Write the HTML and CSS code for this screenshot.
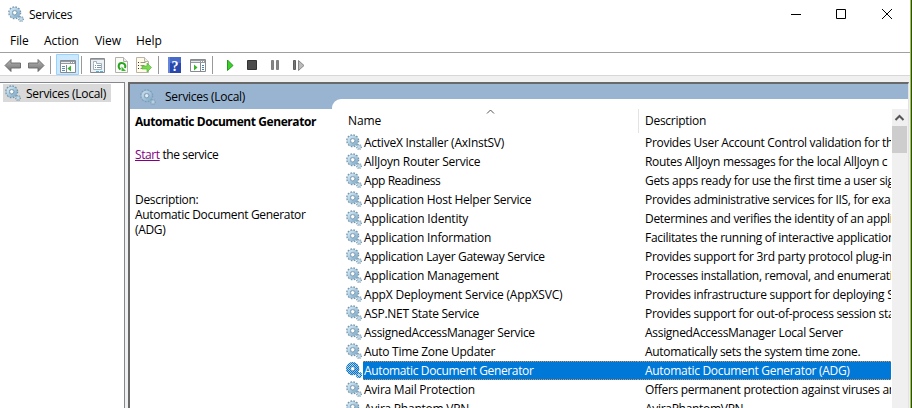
FILE: index.html
```html
<!DOCTYPE html>
<html lang="en">
<head>
<meta charset="utf-8">
<title>Services</title>
<link rel="stylesheet" href="styles.css">
</head>
<body>
<svg class="defs" aria-hidden="true">
  <defs>
    <linearGradient id="steel" x2="1" y2="1"><stop stop-color="#d4e9f5"/><stop offset="1" stop-color="#84aeca"/></linearGradient>
    <linearGradient id="arrow" x2="0" y2="1"><stop stop-color="#b8b8b8"/><stop offset="1" stop-color="#707070"/></linearGradient>
    <pattern id="dither" width="2" height="2" patternUnits="userSpaceOnUse"><path d="M0 0h1v1H0zM1 1h1v1H1z" fill="#0078d7"/></pattern>
    <symbol id="gear" viewBox="0 0 16 16">
      <circle cx="6.7" cy="6.7" r="5.7" fill="none" stroke="#7296ae" stroke-width="1.7" stroke-dasharray="1.7 1.28"/>
      <circle cx="6.7" cy="6.7" r="3.8" fill="none" stroke="#7fa4bd" stroke-width="3.2"/>
      <circle cx="6.7" cy="6.7" r="4" fill="none" stroke="url(#steel)" stroke-width="2.5"/>
      <circle cx="6.7" cy="6.7" r="2.1" fill="#fff" stroke="#6589a4" stroke-width=".7"/>
      <circle cx="13" cy="13" r="2.4" fill="none" stroke="#809dae" stroke-width="1.3" stroke-dasharray="1 .88"/>
      <circle cx="13" cy="13" r="1.4" fill="#fff" stroke="#9bbfd5" stroke-width="1.2"/>
    </symbol>
    <symbol id="gear-selected" viewBox="0 0 16 16">
      <use href="#gear" width="16" height="16"/>
      <circle cx="6.700" cy="6.700" r="4.300" fill="none" stroke="url(#dither)" stroke-width="4.600"/>
      <circle cx="13" cy="13" r="2" fill="none" stroke="url(#dither)" stroke-width="2"/>
    </symbol>
  </defs>
</svg>
<div class="desktop">
  <div class="window">
    <header class="titlebar">
      <svg class="gear"><use href="#gear"/></svg>
      <span class="title">Services</span>
      <svg class="controls" viewBox="0 0 120 28" fill="none" stroke="#000">
        <path d="M11 14.500h10M56.500 9.500h9v9h-9zM102 9l10 10M112 9l-10 10"/>
      </svg>
    </header>
    <nav class="menu"><span class="m-file">File</span><span class="m-action">Action</span><span class="m-view">View</span><span class="m-help">Help</span></nav>
    <div class="toolbar">
      <svg viewBox="0 0 320 22" width="320" height="22">
        <g fill="url(#arrow)" stroke="#666" stroke-width=".9" stroke-linejoin="round">
          <path d="M5 12.500l6-6v3.500h9.500v5H11v3.500z"/><path d="M44 12.500l-6-6v3.500h-9.500v5H38v3.500z"/>
        </g>
        <path d="M50.500 3v18M81.500 3v18M158.500 3v18M212.500 3v18" stroke="#999"/>
        <path d="M56.500 1.500h22v20h-22z" fill="#cce8ff" stroke="#99d1ff"/>
        <g>
          <path d="M60.500 7.500h15v12h-15z" fill="#fff" stroke="#858b91"/>
          <path d="M61 8h14v3H61z" fill="#959ba1"/><path d="M61 9.500h9" stroke="#e8eaec"/><path d="M71 9.500h4" stroke="#fff" stroke-dasharray="1 1"/>
          <path d="M66.500 12v7" stroke="#858b91"/><path d="M62 13.500h3M62 15.500h3M62 17.500h3" stroke="#578fb9"/>
          <path d="M71 12.500v6l-3.500-3z" fill="#35b42c"/>
        </g>
        <g>
          <path d="M90.500 5.500h14v14h-14z" fill="#eef1f3" stroke="#858b91"/><path d="M91 6.500h13" stroke="#a6acb2"/>
          <path d="M93.500 10.500v-2h3v2h5v6h-8z" fill="#fff" stroke="#a5b1ba"/><path d="M95 12.500h1M97 12.500h4M95 14.500h1M97 14.500h4" stroke="#7897ab"/>
          <path d="M96 18.500h3M100 18.500h3" stroke="#4bb3e5"/>
        </g>
        <g>
          <path d="M115.500 4.500h8l4 4v11h-12z" fill="#fbfbf8" stroke="#b2b1aa"/><path d="M123.500 4.500v4h4" fill="#eee" stroke="#b2b1aa"/>
          <path d="M120.500 16.500c-3-2-2-6.500 1-6.500s4.500 2 3.500 5" fill="none" stroke="#2aa321" stroke-width="2"/><path d="M121.500 13.500v4.500h4.500z" fill="#39bd2d"/>
        </g>
        <g>
          <path d="M136.500 4.500h8l4 4v11h-12z" fill="#fffbe8" stroke="#b9b4a7"/><path d="M144.500 4.500v4h4" fill="#eee" stroke="#b9b4a7"/>
          <path d="M138 9.500h1M138 12.500h1M138 15.500h1" stroke="#333"/><path d="M140.500 9.500h5M140.500 12.500h4M140.500 15.500h4" stroke="#9a9485"/>
          <path d="M142 13h5v-3l4.500 4.500-4.500 4.500v-3h-5z" fill="#7bd94e" stroke="#45ae35" stroke-width=".6"/>
        </g>
        <path d="M168 4h13v16h-13z" fill="#2947ad"/><path d="M168 4h2v16h-2z" fill="#6684d8"/><path d="M170 4h11v6h-11z" fill="#4669ca"/>
        <text class="qmark" x="171.500" y="17.500">?</text>
        <g>
          <path d="M190.500 6.500h15v12h-15z" fill="#fff" stroke="#858b91"/><path d="M191 7h14v3h-14z" fill="#959ba1"/><path d="M191 8.500h9" stroke="#e5e7e9"/><path d="M201 8.500h4" stroke="#fff" stroke-dasharray="1 1"/>
          <path d="M200.500 10v8" stroke="#858b91"/><path d="M202 12.500h2M202 14.500h2M202 16.500h2" stroke="#4584b2"/><path d="M194 11.500v6l3.500-3z" fill="#35b42c"/>
        </g>
        <path d="M227.500 7v10.500l5.500-5z" fill="#3bd12b" stroke="#249a1c"/>
        <path d="M247.500 7.500h9v9h-9z" fill="#4b4b4b" stroke="#333"/>
        <path d="M271.500 7.500h2v9h-2zM276.500 7.500h2v9h-2z" fill="#858585" stroke="#777" stroke-width=".9"/>
        <path d="M293.500 7.500h2v9h-2z" fill="#777" stroke="#555" stroke-width=".9"/><path d="M298.500 7.500v10l5.500-5z" fill="#bbb" stroke="#888"/>
      </svg>
    </div>
    <main class="panes">
      <aside class="tree"><div class="tree-item"><svg class="gear"><use href="#gear"/></svg><span class="tree-label">Services (Local)</span></div></aside>
      <section class="content">
        <div class="banner"><svg class="gear"><use href="#gear"/></svg><span>Services (Local)</span></div>
        <div class="split">
          <div class="details">
            <h1>Automatic Document Generator</h1>
            <p class="action"><a>Start</a> the service</p>
            <p class="desc">Description:<br>Automatic Document Generator<br>(ADG)</p>
          </div>
          <div class="listing">
            <div class="corner"></div>
            <div class="list-body">
              <div class="table">
                <div class="thead"><span class="name-head">Name</span><svg class="sort" viewBox="0 0 9 5"><path d="M1 4.500l3.500-3.500 3.500 3.500" fill="none" stroke="#555"/></svg><span class="desc-head">Description</span></div>
                <div class="rows" id="rows"></div>
              </div>
              <div class="scroll"><svg viewBox="0 0 15 17"><path d="M3.500 11l4-4 4 4" fill="none" stroke="#555" stroke-width="2"/></svg><div class="thumb"></div></div>
            </div>
          </div>
        </div>
      </section>
    </main>
  </div>
  <div class="edge"></div>
</div>
<script src="script.js"></script>
</body>
</html>
```
FILE: styles.css
```css
* { box-sizing: border-box; }
body { margin: 0; width: 912px; height: 408px; overflow: hidden; background: #fff; color: #000; font: 12px/15px "Open Sans", "Noto Sans", sans-serif; letter-spacing: -0.28px; }
h1, p { margin: 0; }
.defs { position: absolute; width: 0; height: 0; }
.desktop { display: flex; height: 408px; }
.window { width: 910px; height: 408px; display: flex; flex-direction: column; }
.edge { width: 2px; background: linear-gradient(90deg, #9ccc28 1px, #35462e 1px); }
.gear { width: 16px; height: 16px; flex: none; display: block; }
.titlebar { height: 28px; display: flex; align-items: center; padding-left: 8px; }
.title { margin-left: 5px; flex: 1; padding-top: 1px; }
.controls { width: 120px; height: 28px; margin-right: 10px; }
.menu { height: 25px; display: flex; padding: 5px 0 0 10px; border-bottom: 1px solid #a0a0a0; letter-spacing: -0.05px; }
.m-file { width: 34px; }
.m-action { width: 51px; }
.m-view { width: 41px; }
.toolbar { height: 23px; border-bottom: 1px solid #d7d7d7; }
.toolbar svg { display: block; }
.qmark { font: bold 14px "Liberation Serif", serif; fill: #fff; }
.panes { flex: 1; min-height: 0; padding: 6px 1px 0 0; background: #f0f0f0; display: flex; }
.tree { width: 125px; border: 1px solid #828790; border-width: 1px 1px 0 0; padding: 1px 0 0 3px; background: #fff; }
.tree-item { width: 108px; height: 18px; display: flex; align-items: center; padding-left: 2px; background: #d9d9d9; }
.tree-label { margin-left: 5px; white-space: nowrap; }
.content { flex: 1; min-width: 0; margin-left: 3px; border: 2px solid #696969; border-right: 1px solid #e3e3e3; border-bottom: 0; background: #fff; display: flex; flex-direction: column; }
.banner { height: 25px; flex: none; background: #99b4d1; display: flex; align-items: center; padding-left: 10px; }
.banner .gear { opacity: .75; }
.banner span { margin-left: 9px; }
.split { flex: 1; min-height: 0; display: flex; }
.details { width: 202px; padding: 5px 0 0 5px; white-space: nowrap; }
h1 { font: bold 12px/15px "Open Sans", "Noto Sans", sans-serif; letter-spacing: -0.43px; }
.action { margin-top: 18px; letter-spacing: -0.4px; }
.action a { color: #800080; text-decoration: underline; }
.desc { margin-top: 30px; letter-spacing: -0.32px; }
.listing { flex: 1; min-width: 0; margin-top: -10px; }
.corner { height: 10px; background: #fff; border-top-left-radius: 9px; }
.list-body { display: flex; height: 299px; }
.table { width: 559px; margin-right: 1px; overflow: hidden; }
.thead { height: 24px; display: flex; padding-left: 16px; }
.name-head { width: 138px; padding-top: 4px; letter-spacing: -0.1px; }
.sort { width: 9px; height: 5px; }
.desc-head { margin-left: 143px; padding: 4px 0 0 6px; border-left: 1px solid #e3e3e3; }
.row { display: grid; grid-template-columns: 17px 275px 267px; height: 19px; padding-left: 14px; align-items: center; white-space: nowrap; overflow: hidden; }
.row .gear { margin-top: -1px; }
.row .name, .row .about { height: 19px; line-height: 19px; overflow: hidden; }
.row .name { padding-left: 1px; }
.row .about { padding-left: 7px; letter-spacing: -0.3px; }
.row.selected .name, .row.selected .about { color: #fff; background: #0078d7; border: dotted #d89052; border-width: 1px 0; line-height: 17px; }
.scroll { width: 16px; background: #f0f0f0; }
.scroll svg { display: block; width: 15px; height: 17px; }
.thumb { width: 15px; height: 27px; background: #cdcdcd; }
```
FILE: script.js
```js
// name, description, letter spacing of the name in hundredths of a pixel
const services = [
  ["ActiveX Installer (AxInstSV)", "Provides User Account Control validation for the", -25],
  ["AllJoyn Router Service", "Routes AllJoyn messages for the local AllJoyn c", -23],
  ["App Readiness", "Gets apps ready for use the first time a user sign", -44],
  ["Application Host Helper Service", "Provides administrative services for IIS, for exam", -26],
  ["Application Identity", "Determines and verifies the identity of an appli", -20],
  ["Application Information", "Facilitates the running of interactive application", -22],
  ["Application Layer Gateway Service", "Provides support for 3rd party protocol plug-in", -30],
  ["Application Management", "Processes installation, removal, and enumeratio", -23],
  ["AppX Deployment Service (AppXSVC)", "Provides infrastructure support for deploying S", -18],
  ["ASP.NET State Service", "Provides support for out-of-process session sta", -30],
  ["AssignedAccessManager Service", "AssignedAccessManager Local Server", -31],
  ["Auto Time Zone Updater", "Automatically sets the system time zone.", -29],
  ["Automatic Document Generator", "Automatic Document Generator (ADG)", -36],
  ["Avira Mail Protection", "Offers permanent protection against viruses an", -24],
  ["Avira Phantom VPN", "AviraPhantomVPN", -24]
];
document.getElementById("rows").innerHTML = services.map(([name, about, track], i) =>
  `<div class="row${i === 12 ? " selected" : ""}"><svg class="gear"><use href="#gear${i === 12 ? "-selected" : ""}"/></svg><span class="name" style="letter-spacing:${track / 100}px">${name}</span><span class="about">${about}</span></div>`
).join("");
```
